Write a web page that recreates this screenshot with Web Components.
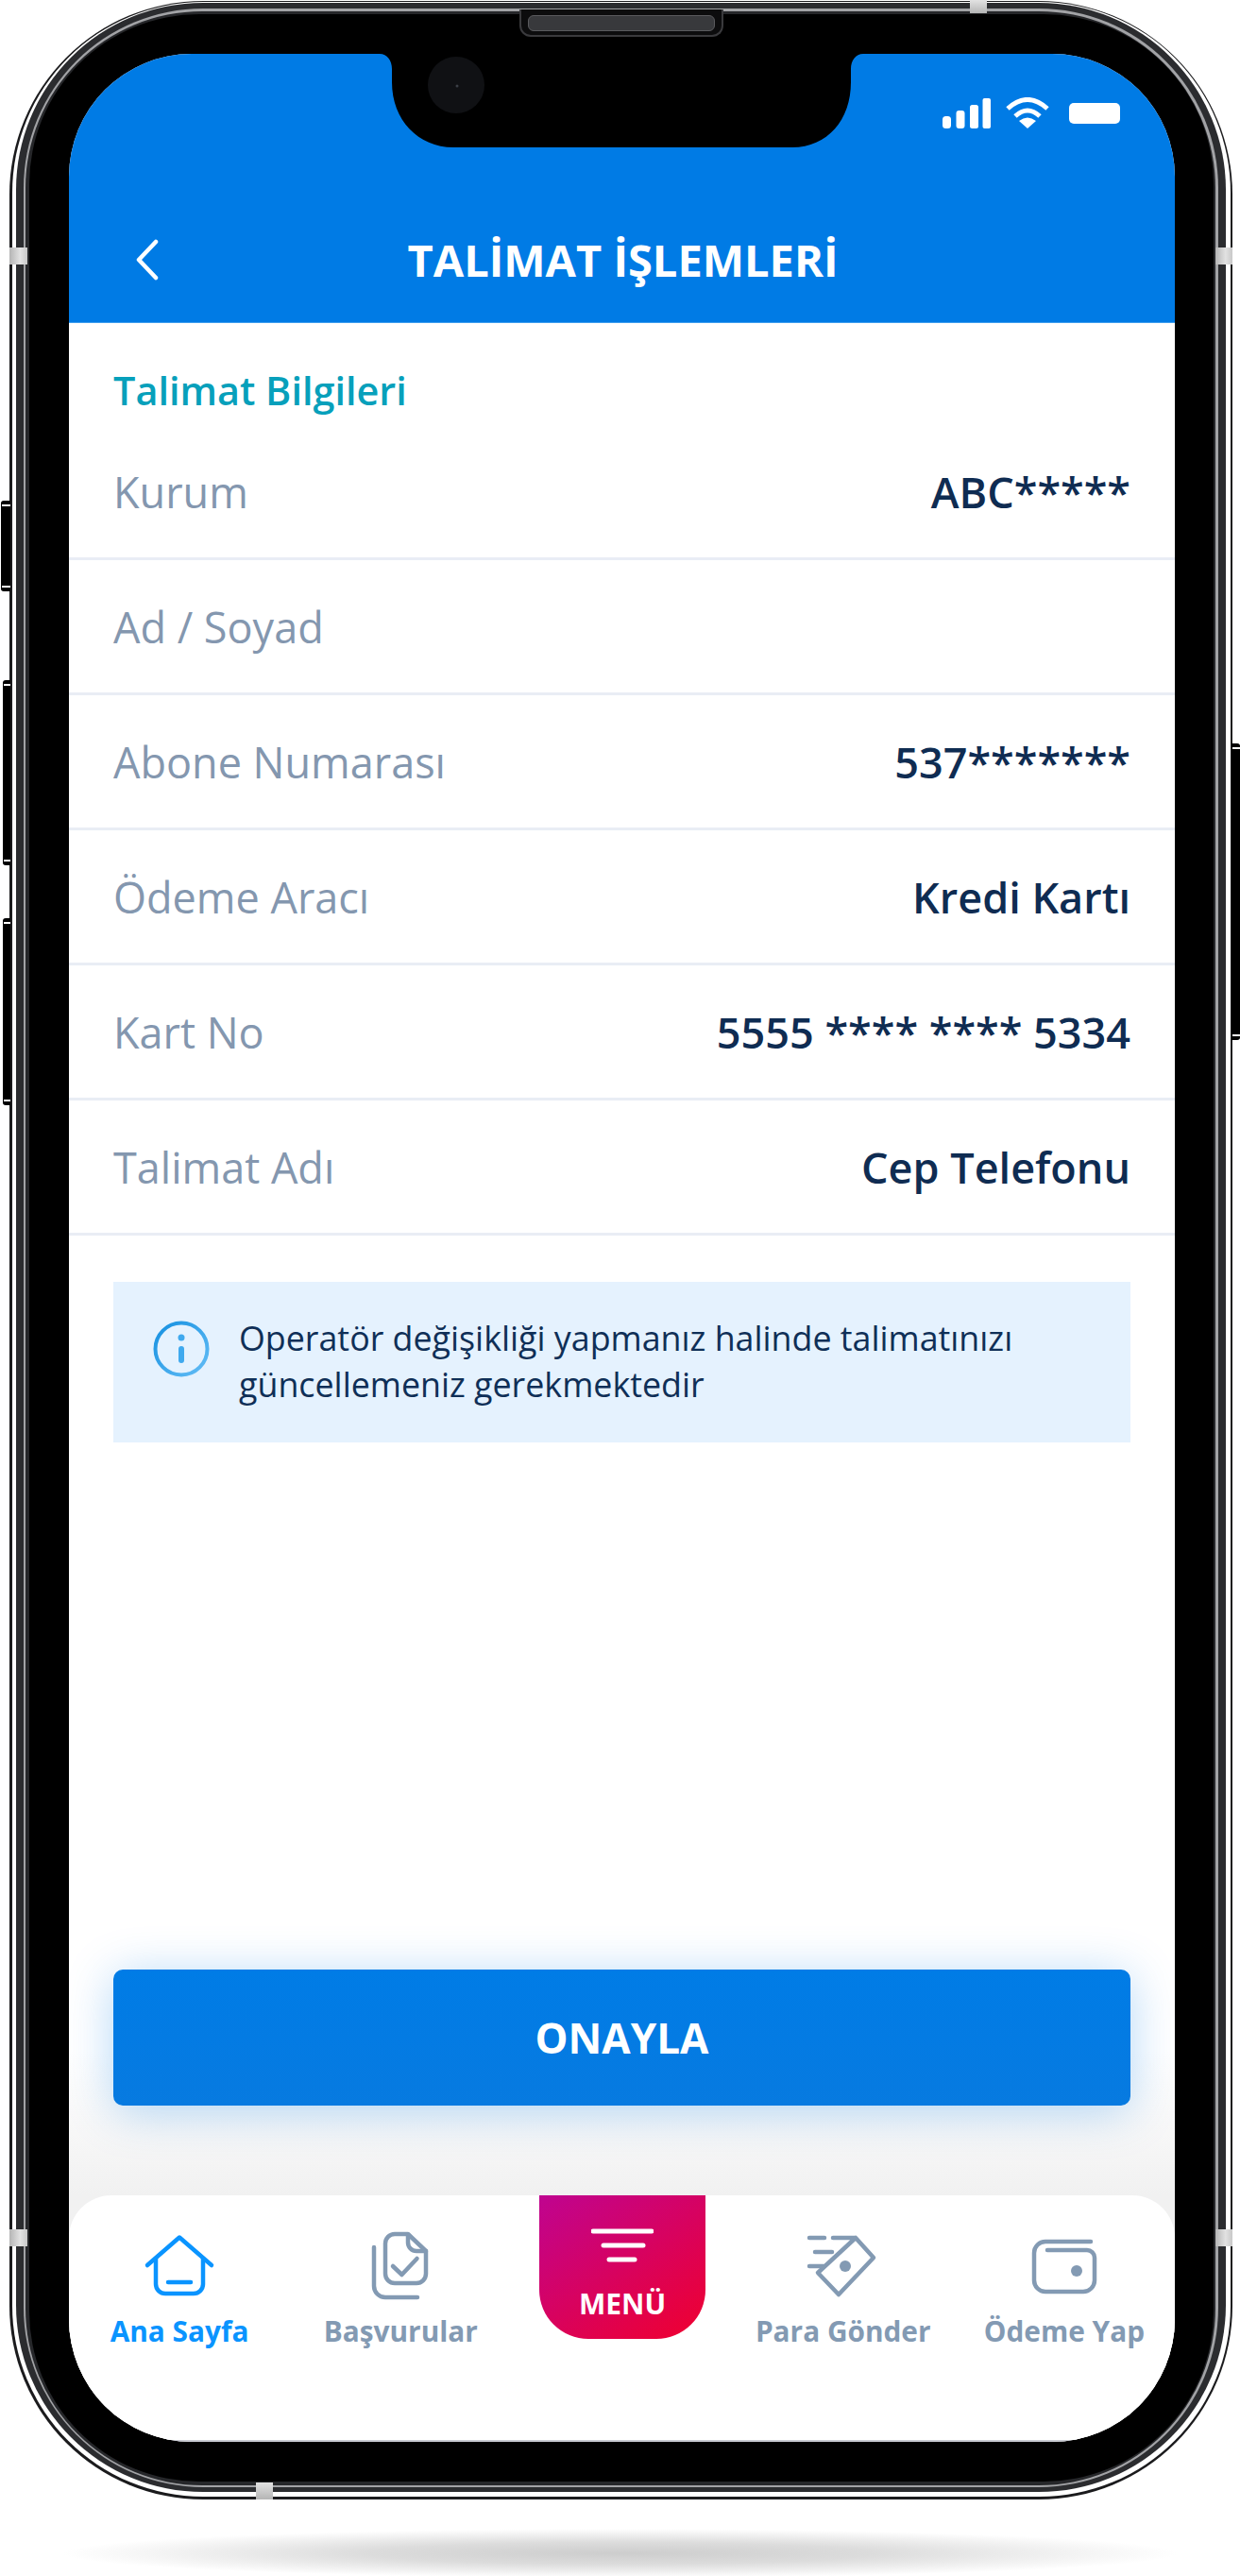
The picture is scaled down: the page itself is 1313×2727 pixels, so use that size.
<!DOCTYPE html>
<html lang="tr">
<head>
<meta charset="utf-8">
<title>Talimat İşlemleri</title>
<style>
  html, body { margin: 0; padding: 0; background: #fff; }
  body { width: 1313px; height: 2727px; overflow: hidden; font-family: "Open Sans", "Noto Sans", sans-serif; }
</style>
</head>
<body>
<phone-frame>
  <app-screen>
    <app-header slot="top" title="TALİMAT İŞLEMLERİ"></app-header>
    <section-label slot="top">Talimat Bilgileri</section-label>
    <info-row slot="top" label="Kurum" value="ABC*****"></info-row>
    <info-row slot="top" label="Ad / Soyad"></info-row>
    <info-row slot="top" label="Abone Numarası" value="537*******"></info-row>
    <info-row slot="top" label="Ödeme Aracı" value="Kredi Kartı"></info-row>
    <info-row slot="top" label="Kart No" value="5555 **** **** 5334"></info-row>
    <info-row slot="top" label="Talimat Adı" value="Cep Telefonu"></info-row>
    <info-note slot="top">Operatör değişikliği yapmanız halinde talimatınızı güncellemeniz gerekmektedir</info-note>
    <primary-button slot="bottom">ONAYLA</primary-button>
    <tab-bar slot="bottom">
      <tab-item label="Ana Sayfa" icon="home" active></tab-item>
      <tab-item label="Başvurular" icon="docs"></tab-item>
      <tab-menu label="MENÜ"></tab-menu>
      <tab-item label="Para Gönder" icon="tag"></tab-item>
      <tab-item label="Ödeme Yap" icon="wallet"></tab-item>
    </tab-bar>
  </app-screen>
</phone-frame>
<floor-shadow></floor-shadow>

<script>
const tabIcons = {
  home: `<path d="M6 39 40 9.5 74 39"/><path d="M15 32v27a10 10 0 0 0 10 10h30a10 10 0 0 0 10-10V32"/><path d="M28 57h24"/>`,
  docs: `<path d="M24 16a10 10 0 0 1 10-10h14l19 18v24a10 10 0 0 1-10 10H34a10 10 0 0 1-10-10z"/><path d="M48 7v8a9 9 0 0 0 9 9h10"/><path d="M32 40l9.5 9 16-17"/><path d="M12 20v41a12 12 0 0 0 12 12h34"/>`,
  tag: `<path d="M29 10h24l19 21-37 39-22-23 40-37"/><path d="M4 10h16"/><path d="M10 25h18"/><path d="M4 40h15"/><circle cx="42" cy="40" r="6" fill="currentColor" stroke="none"/>`,
  wallet: `<path d="M68 14H20A12 12 0 0 0 8 26v29a12 12 0 0 0 12 12h40a12 12 0 0 0 12-12V31a8 8 0 0 0-8-8H22"/><circle cx="53" cy="45" r="6" fill="currentColor" stroke="none"/>`,
};

class PhoneFrame extends HTMLElement {
  constructor() {
    super();
    this.attachShadow({ mode: "open" });
  }

  connectedCallback() {
    this.shadowRoot.innerHTML = `
      <style>
        :host { display: block; position: relative; width: 1313px; height: 2646px; }
        .shell { box-sizing: border-box; width: 1295px; height: 2645px; margin-left: 10px; position: relative; top: 1px;
          border-radius: 205px; background: #1b1b1d; padding: 1px 2px 3px 3px; }
        .white { height: 100%; box-sizing: border-box; border-radius: 202px; background: #fff; padding: 1px 5px 5px 4px; }
        .dark { height: 100%; box-sizing: border-box; border-radius: 198px; background: #2b2c2f; padding: 6px 8px 5px 8px; }
        .line { height: 100%; box-sizing: border-box; border-radius: 190px; background: #a2a3a6; padding: 3px 3px 2px 2px; }
        .rim { height: 100%; box-sizing: border-box; border-radius: 187px; background: #26272a; padding: 3px 2px 4px 4px; }
        .bezel { height: 100%; box-sizing: border-box; border-radius: 180px; background: #000; padding: 42px 41px 43px 42px; }
        .band { position: absolute; background: linear-gradient(90deg, #b5b5b5, #e2e2e2 60%, #c8c8c8); }
        .band.h { background: linear-gradient(#e2e2e2, #b5b5b5); }
        .speaker { position: absolute; left: 550px; top: 10px; width: 216px; height: 29px; box-sizing: border-box;
          background: #0c0c0d; border: 2px solid #3a3a3d; border-top: 0; border-radius: 0 0 12px 12px; display: flex; padding: 6px 7px 0; }
        .grille { flex: 1; height: 15px; border-radius: 6px; background: #38393c; border: 1px solid #5a5a5d; }
        .key { position: absolute; background: #000; border-top: 3px solid #000; border-bottom: 3px solid #000; box-sizing: border-box; }
        .key::before, .key::after { content: ""; position: absolute; left: 1px; right: 0; height: 2px; background: #fff; }
        .key::before { top: 1px; }
        .key::after { bottom: 1px; }
        .key.left { border-radius: 3px 0 0 3px; }
        .key.right { border-radius: 0 3px 3px 0; }
      </style>
      <div class="shell">
        <div class="white"><div class="dark"><div class="line"><div class="rim"><div class="bezel"><slot></slot></div></div></div></div></div>
      </div>
      <div class="speaker"><div class="grille"></div></div>
      <div class="band" style="left:10px;top:262px;width:19px;height:18px"></div>
      <div class="band" style="left:10px;top:2360px;width:19px;height:18px"></div>
      <div class="band" style="left:1287px;top:262px;width:18px;height:18px"></div>
      <div class="band" style="left:1287px;top:2360px;width:18px;height:18px"></div>
      <div class="band h" style="left:1027px;top:0;width:18px;height:14px"></div>
      <div class="band h" style="left:271px;top:2628px;width:18px;height:18px"></div>
      <div class="key left" style="left:1px;top:530px;width:10px;height:96px"></div>
      <div class="key left" style="left:3px;top:720px;width:8px;height:196px"></div>
      <div class="key left" style="left:3px;top:972px;width:8px;height:198px"></div>
      <div class="key right" style="left:1304px;top:787px;width:9px;height:314px"></div>`;
  }
}

class AppScreen extends HTMLElement {
  constructor() {
    super();
    this.attachShadow({ mode: "open" });
  }

  connectedCallback() {
    this.shadowRoot.innerHTML = `
      <style>
        :host { display: block; position: relative; height: 2528px; border-radius: 130px; overflow: hidden; background: #fff; }
        .wrap { height: 100%; display: flex; flex-direction: column; justify-content: space-between; }
        .bottom { background: linear-gradient(#fff 0, #fff 130px, #f1f1f1 283px); border-bottom: 2px solid #c9cbd3; }
        .notch { position: absolute; left: 0; top: 0; }
      </style>
      <div class="wrap">
        <div class="top"><slot name="top"></slot></div>
        <div class="bottom"><slot name="bottom"></slot></div>
      </div>
      <svg class="notch" width="1171" height="100" viewBox="0 0 1171 100">
        <path d="M329 0c8 0 13 7 13 16v14c0 40 28 69 65 69h359c37 0 62-29 62-69V16c0-9 5-16 13-16z" fill="#000"/>
        <circle cx="410" cy="33" r="30" fill="#101114"/>
        <circle cx="411" cy="34" r="1.5" fill="#3b3f46"/>
      </svg>`;
  }
}

class AppHeader extends HTMLElement {
  static get observedAttributes() {
    return ["title"];
  }

  constructor() {
    super();
    this.attachShadow({ mode: "open" });
  }

  connectedCallback() {
    this.render();
  }

  attributeChangedCallback() {
    this.render();
  }

  render() {
    this.shadowRoot.innerHTML = `
      <style>
        :host { display: block; box-sizing: border-box; height: 285px; background: #007be5; border-bottom: 1px solid #3f9eee; color: #fff; }
        .status { display: flex; justify-content: flex-end; align-items: flex-start; gap: 16px; height: 34px; padding: 46px 58px 0 0; }
        .battery { width: 54px; height: 22px; margin: 6px 0 0 5px; border-radius: 5px; background: #fff; }
        .bar { display: grid; grid-template-columns: 1fr auto 1fr; align-items: center; height: 80px; margin-top: 98px; padding: 0 0 0 70px; }
        .back { display: block; }
        h1 { margin: 0; font: 700 47px/80px "Open Sans", sans-serif; white-space: nowrap; letter-spacing: 0; transform: translateX(-34px); }
      </style>
      <div class="status">
        <svg width="52" height="34" viewBox="0 0 52 34" fill="#fff">
          <rect x="1" y="20" width="9" height="13" rx="3.5"/><rect x="15.500" y="14" width="9" height="19" rx="3"/>
          <rect x="30" y="8" width="9" height="25" rx="2.500"/><rect x="43.500" y="1" width="8.500" height="32" rx="2"/>
        </svg>
        <svg width="46" height="34" viewBox="0 0 46 34">
          <path d="M2 12Q23-7 44 12" fill="none" stroke="#fff" stroke-width="5"/>
          <path d="M10 20Q23 8 36 20" fill="none" stroke="#fff" stroke-width="5"/>
          <path d="M23 33 14 25Q23 18 32 25z" fill="#fff"/>
        </svg>
        <div class="battery"></div>
      </div>
      <div class="bar">
        <svg class="back" width="26" height="44" viewBox="0 0 26 44" fill="none" stroke="#fff" stroke-width="4.500" stroke-linecap="round" stroke-linejoin="round">
          <path d="M22 3 4 22l18 19"/>
        </svg>
        <h1>${this.getAttribute("title") || ""}</h1>
        <span></span>
      </div>`;
  }
}

class SectionLabel extends HTMLElement {
  constructor() {
    super();
    this.attachShadow({ mode: "open" });
  }

  connectedCallback() {
    this.shadowRoot.innerHTML = `
      <style>
        :host { display: block; box-sizing: border-box; height: 108px; padding: 43px 47px 0; color: #07a0bb; font: 600 41.400px/56px "Open Sans", sans-serif; }
      </style>
      <slot></slot>`;
  }
}

class InfoRow extends HTMLElement {
  static get observedAttributes() {
    return ["label", "value"];
  }

  constructor() {
    super();
    this.attachShadow({ mode: "open" });
  }

  connectedCallback() {
    this.render();
  }

  attributeChangedCallback() {
    this.render();
  }

  render() {
    this.shadowRoot.innerHTML = `
      <style>
        :host { display: flex; box-sizing: border-box; height: 143px; padding: 2px 47px 0; align-items: center; justify-content: space-between;
          border-bottom: 3px solid #e9edf5; font: 45px/60px "Open Sans", sans-serif; }
        .label { color: #8497af; }
        .value { color: #0f2c52; font-weight: 600; }
      </style>
      <span class="label">${this.getAttribute("label") || ""}</span>
      <span class="value">${this.getAttribute("value") || ""}</span>`;
  }
}

class InfoNote extends HTMLElement {
  constructor() {
    super();
    this.attachShadow({ mode: "open" });
  }

  connectedCallback() {
    this.shadowRoot.innerHTML = `
      <style>
        :host { display: flex; box-sizing: border-box; height: 170px; margin: 49px 47px 0; padding: 35px 60px 0 42px; gap: 31px;
          background: #e5f2fe; color: #0f2f57; font: 35.800px/49px "Open Sans", sans-serif; }
        svg { flex: none; margin-top: 6px; }
      </style>
      <svg width="60" height="60" viewBox="0 0 60 60">
        <defs><linearGradient id="g" x1="0" y1="0" x2="1" y2="1"><stop offset="0" stop-color="#1590e0"/><stop offset="1" stop-color="#63bdf6"/></linearGradient></defs>
        <circle cx="30" cy="30" r="27.500" fill="none" stroke="url(#g)" stroke-width="4"/>
        <circle cx="30" cy="18" r="3.500" fill="#3fa9ee"/>
        <rect x="27" y="27" width="6" height="18" rx="3" fill="#3fa9ee"/>
      </svg>
      <div><slot></slot></div>`;
  }
}

class PrimaryButton extends HTMLElement {
  constructor() {
    super();
    this.attachShadow({ mode: "open" });
  }

  connectedCallback() {
    this.shadowRoot.innerHTML = `
      <style>
        :host { display: block; padding: 44px 47px 95px; }
        button { display: block; width: 100%; height: 144px; border: 0; border-radius: 10px; padding: 0; color: #fff;
          background: linear-gradient(#007ce6, #077ae0); box-shadow: 0 6px 50px rgba(0, 124, 228, 0.3);
          font: 700 44px/144px "Open Sans", sans-serif; }
      </style>
      <button><slot></slot></button>`;
  }
}

class TabBar extends HTMLElement {
  constructor() {
    super();
    this.attachShadow({ mode: "open" });
  }

  connectedCallback() {
    this.shadowRoot.innerHTML = `
      <style>
        :host { display: grid; grid-template-columns: repeat(5, 1fr); box-sizing: border-box; height: 259px; background: #fff; border-radius: 45px 45px 0 0; }
      </style>
      <slot></slot>`;
  }
}

class TabItem extends HTMLElement {
  static get observedAttributes() {
    return ["label", "icon", "active"];
  }

  constructor() {
    super();
    this.attachShadow({ mode: "open" });
  }

  connectedCallback() {
    this.render();
  }

  attributeChangedCallback() {
    this.render();
  }

  render() {
    this.shadowRoot.innerHTML = `
      <style>
        :host { display: flex; flex-direction: column; align-items: center; padding-top: 35px; color: #839ab3; }
        :host([active]) { color: #0a94ff; }
        svg { display: block; }
        span { margin-top: 8px; font: 700 29.800px/42px "Open Sans", sans-serif; white-space: nowrap; }
      </style>
      <svg width="80" height="80" viewBox="0 0 80 80" fill="none" stroke="currentColor" stroke-width="4.500" stroke-linecap="round" stroke-linejoin="round">
        ${tabIcons[this.getAttribute("icon")] || ""}
      </svg>
      <span>${this.getAttribute("label") || ""}</span>`;
  }
}

class TabMenu extends HTMLElement {
  static get observedAttributes() {
    return ["label"];
  }

  constructor() {
    super();
    this.attachShadow({ mode: "open" });
  }

  connectedCallback() {
    this.render();
  }

  attributeChangedCallback() {
    this.render();
  }

  render() {
    this.shadowRoot.innerHTML = `
      <style>
        :host { display: flex; justify-content: center; align-items: flex-start; padding-left: 1px; }
        .menu { display: flex; flex-direction: column; align-items: center; box-sizing: border-box; width: 176px; height: 152px; padding-top: 33px;
          border-radius: 0 0 52px 52px; background: linear-gradient(145deg, #bf0490, #f0002e); color: #fff; }
        svg { display: block; }
        span { margin-top: 21px; font: 700 30px/42px "Open Sans", sans-serif; }
      </style>
      <div class="menu">
        <svg width="66" height="40" viewBox="0 0 66 40" fill="none" stroke="#fff" stroke-width="5" stroke-linecap="round">
          <path d="M2 5h62"/><path d="M13 20h42"/><path d="M19 35h27"/>
        </svg>
        <span>${this.getAttribute("label") || ""}</span>
      </div>`;
  }
}

class FloorShadow extends HTMLElement {
  constructor() {
    super();
    this.attachShadow({ mode: "open" });
  }

  connectedCallback() {
    this.shadowRoot.innerHTML = `
      <style>
        :host { display: block; height: 81px; background: radial-gradient(ellipse 590px 26px at 50% 57px, #cdcdcd 0, #dcdcdc 45%, rgba(255, 255, 255, 0) 100%); }
      </style>`;
  }
}

customElements.define("phone-frame", PhoneFrame);
customElements.define("app-screen", AppScreen);
customElements.define("app-header", AppHeader);
customElements.define("section-label", SectionLabel);
customElements.define("info-row", InfoRow);
customElements.define("info-note", InfoNote);
customElements.define("primary-button", PrimaryButton);
customElements.define("tab-bar", TabBar);
customElements.define("tab-item", TabItem);
customElements.define("tab-menu", TabMenu);
customElements.define("floor-shadow", FloorShadow);
</script>
</body>
</html>
